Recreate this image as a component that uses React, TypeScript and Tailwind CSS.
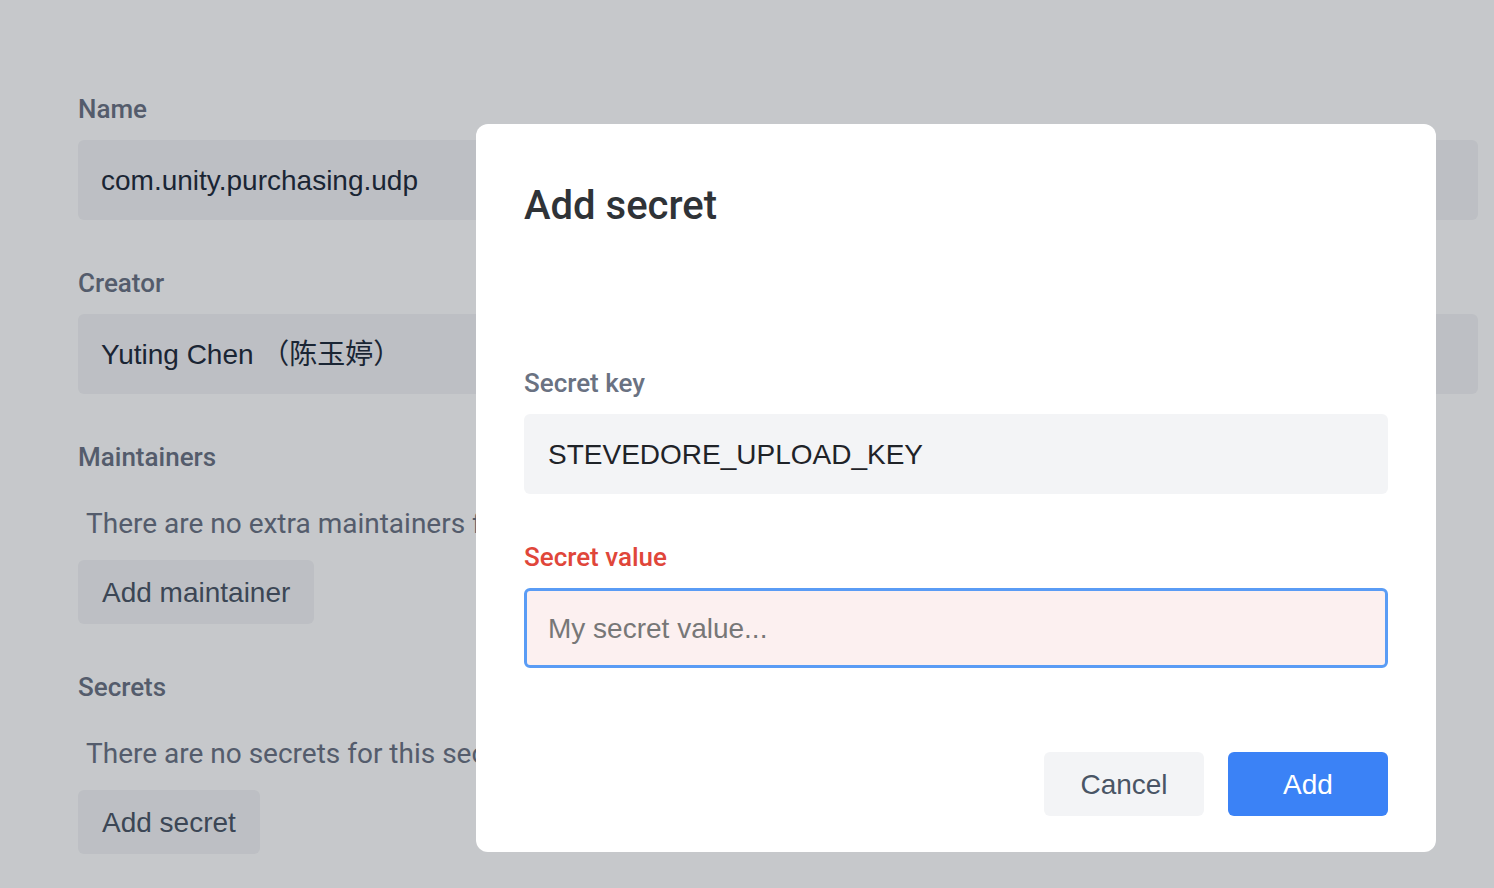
import { useState } from "react";

const roboto = "font-['Roboto','Noto_Sans_CJK_SC',sans-serif]";
const helv = "font-['Liberation_Sans','Noto_Sans_CJK_SC',sans-serif]";

function Label({ children, className = "" }: { children: React.ReactNode; className?: string }) {
  return (
    <div className={`${roboto} h-[36px] text-[26px] leading-[36px] font-medium ${className}`}>
      {children}
    </div>
  );
}

function Field({ value }: { value: string }) {
  return (
    <div className={`${helv} mt-[13px] flex h-[80px] items-center rounded-md bg-gray-100 px-[23px] pt-[2px] text-[28px] text-gray-800`}>
      {value}
    </div>
  );
}

export default function App() {
  const [value, setValue] = useState("");

  return (
    <div className="relative h-[888px] w-full overflow-hidden bg-white">
      {/* page behind the dialog */}
      <div className="pt-[91px] pr-[16px] pl-[78px] text-gray-500">
        <Label>Name</Label>
        <Field value="com.unity.purchasing.udp" />

        <Label className="mt-[45px]">Creator</Label>
        <Field value="Yuting Chen （陈玉婷）" />

        <Label className="mt-[45px]">Maintainers</Label>
        <p className={`${roboto} mt-[29px] pl-[8px] text-[28px] leading-[40px] text-gray-500`}>
          There are no extra maintainers for this package.
        </p>
        <button className={`${helv} mt-[16px] h-[64px] rounded-md bg-gray-100 px-[24px] pt-[2px] text-[28px] text-gray-600`}>
          Add maintainer
        </button>

        <Label className="mt-[45px]">Secrets</Label>
        <p className={`${roboto} mt-[29px] pl-[8px] text-[28px] leading-[40px] text-gray-500`}>
          There are no secrets for this secret store.
        </p>
        <button className={`${helv} mt-[16px] h-[64px] rounded-md bg-gray-100 px-[24px] pt-[2px] text-[28px] text-gray-600`}>
          Add secret
        </button>
      </div>

      {/* overlay */}
      <div className="absolute inset-0 bg-[#111827]/[0.24]" />

      {/* dialog */}
      <div className="absolute top-[124px] left-[476px] flex w-[960px] flex-col rounded-xl bg-white px-[48px] pt-[48px] pb-[36px]">
        <h2 className={`${roboto} h-[64px] pt-[2px] text-[40px] leading-[64px] font-medium text-[#2f3337]`}>
          Add secret
        </h2>

        <Label className="mt-[129px] text-gray-500">Secret key</Label>
        <div className={`${helv} mt-[13px] flex h-[80px] items-center rounded-md bg-gray-100 px-[24px] pt-[2px] text-[28px] text-[#1f2328]`}>
          STEVEDORE_UPLOAD_KEY
        </div>

        <Label className="mt-[45px] text-[#e0463a]">Secret value</Label>
        <input
          value={value}
          onChange={(e) => setValue(e.target.value)}
          placeholder="My secret value..."
          className={`${helv} mt-[13px] h-[80px] rounded-md border-[3px] border-[#5a9cf5] bg-[#fcf0f0] px-[21px] pt-[2px] text-[28px] text-[#1f2328] outline-none placeholder:text-[#777]`}
        />

        <div className="mt-[84px] flex justify-end gap-[24px]">
          <button className={`${helv} h-[64px] w-[160px] rounded-md bg-gray-100 pt-[2px] text-[28px] text-gray-600`}>
            Cancel
          </button>
          <button className={`${helv} h-[64px] w-[160px] rounded-md bg-[#3b82f6] pt-[2px] text-[28px] text-white`}>
            Add
          </button>
        </div>
      </div>
    </div>
  );
}
